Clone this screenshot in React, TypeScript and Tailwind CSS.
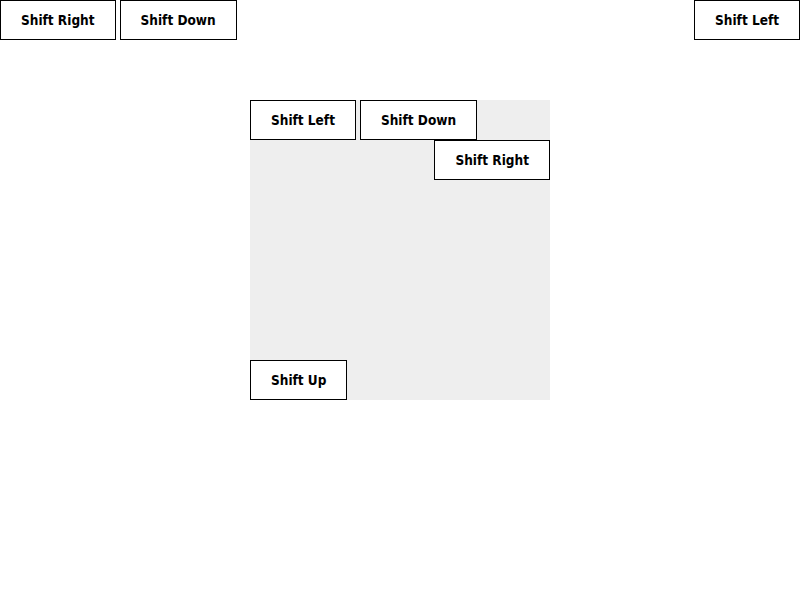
const btn =
  "h-10 px-5 pt-[2px] border border-black bg-white text-black text-[13.5px] font-bold whitespace-nowrap leading-none";

export default function App() {
  return (
    <div
      className="w-[800px] h-[600px] bg-white"
      style={{ fontFamily: '"DejaVu Sans Condensed", "DejaVu Sans", Verdana, sans-serif' }}
    >
      <div className="flex justify-between">
        <div className="flex gap-1">
          <button className={btn}>Shift Right</button>
          <button className={btn}>Shift Down</button>
        </div>
        <button className={btn}>Shift Left</button>
      </div>

      <div className="ml-[250px] mt-[60px] w-[300px] h-[300px] bg-[#eeeeee] flex flex-col">
        <div className="flex gap-1">
          <button className={btn}>Shift Left</button>
          <button className={btn}>Shift Down</button>
        </div>
        <div className="flex justify-end">
          <button className={btn}>Shift Right</button>
        </div>
        <div className="flex mt-auto">
          <button className={btn}>Shift Up</button>
        </div>
      </div>
    </div>
  );
}
